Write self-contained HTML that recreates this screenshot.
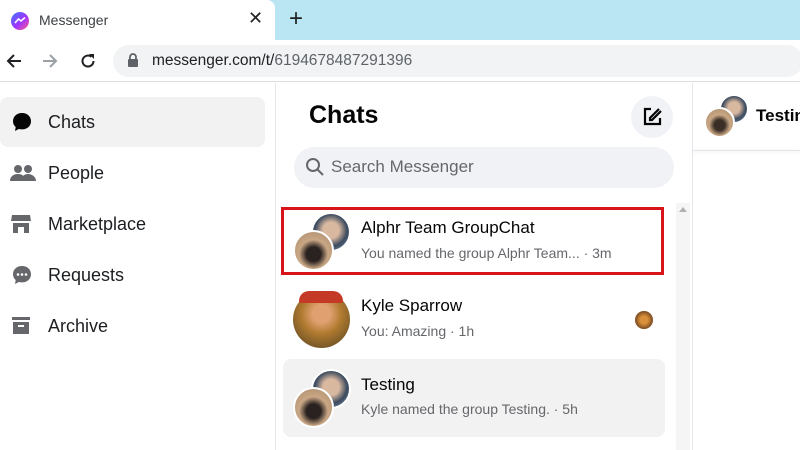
<!DOCTYPE html>
<html><head><meta charset="utf-8"><style>
*{margin:0;padding:0;box-sizing:border-box}
body{width:800px;height:450px;overflow:hidden;background:#fff;font-family:"Liberation Sans",sans-serif;position:relative;color:#050505}
.a{position:absolute}
.nav{position:absolute;left:0;width:265px;height:50px;display:flex;align-items:center;font-size:18px;color:#1c1e21}
.nav svg{position:absolute;left:10px}
.nav span{position:absolute;left:48px}
.av{position:absolute;border-radius:50%;border:2px solid #fff}
.name{position:absolute;left:361px;font-size:17px;color:#050505}
.sub{position:absolute;left:361px;font-size:14px;color:#65676b}
</style></head><body>
<!-- tab bar -->
<div class="a" style="left:0;top:0;width:800px;height:40px;background:#b9e6f2"></div>
<div class="a" style="left:0;top:0;width:275px;height:40px;background:#fff;border-top-right-radius:8px"></div>
<div class="a" style="left:11px;top:12px;width:18px;height:18px;border-radius:50%;background:linear-gradient(135deg,#3d7bff,#a033ff 55%,#ff5c87)"></div>
<svg class="a" style="left:14px;top:16px" width="12" height="9" viewBox="0 0 12 9"><path d="M1 7 L4.5 3 L7 5 L11 1.5" stroke="#fff" stroke-width="1.6" fill="none"/></svg>
<div class="a" style="left:39px;top:12px;font-size:14px;color:#3c4043">Messenger</div>
<div class="a" style="left:248px;top:8px;font-size:18px;color:#202124">✕</div>
<div class="a" style="left:289px;top:5px;font-size:24px;color:#202124">+</div>
<!-- address bar -->
<div class="a" style="left:0;top:40px;width:800px;height:42px;background:#fff;border-bottom:1px solid #dadce0"></div>
<svg class="a" style="left:5px;top:52px" width="18" height="18" viewBox="0 0 18 18"><path d="M16 9H3M9 3L3 9l6 6" stroke="#202124" stroke-width="2" fill="none"/></svg>
<svg class="a" style="left:41px;top:52px" width="18" height="18" viewBox="0 0 18 18"><path d="M2 9h13M9 3l6 6-6 6" stroke="#9aa0a6" stroke-width="2" fill="none"/></svg>
<svg class="a" style="left:79px;top:52px" width="18" height="18" viewBox="0 0 18 18"><path d="M14.5 9A5.5 5.5 0 1 1 12.5 4.8" stroke="#202124" stroke-width="2" fill="none"/><path d="M10 2h5v5z" fill="#202124"/></svg>
<div class="a" style="left:113px;top:45px;width:690px;height:32px;border-radius:16px;background:#f1f3f4"></div>
<svg class="a" style="left:127px;top:53px" width="12" height="14" viewBox="0 0 12 14"><path d="M3 6V4a3 3 0 0 1 6 0v2" stroke="#5f6368" stroke-width="1.8" fill="none"/><rect x="1" y="6" width="10" height="8" rx="1" fill="#5f6368"/></svg>
<div class="a" style="left:152px;top:52px;font-size:15.5px;color:#202124">messenger.com/t/<span style="color:#5f6368">6194678487291396</span></div>
<!-- dividers -->
<div class="a" style="left:275px;top:83px;width:1px;height:367px;background:#e4e6eb"></div>
<div class="a" style="left:692px;top:83px;width:1px;height:367px;background:#e4e6eb"></div>
<div class="a" style="left:693px;top:150px;width:107px;height:1px;background:#e4e6eb;box-shadow:0 1px 3px rgba(0,0,0,.1)"></div>
<!-- sidebar -->
<div class="a" style="left:0;top:97px;width:265px;height:50px;background:#f2f2f2;border-radius:8px"></div>
<div class="nav" style="top:97px"><svg width="24" height="24" viewBox="0 0 24 24"><path d="M12 3C6.5 3 3 6.8 3 11.2c0 2.4 1 4.4 2.7 5.8L5 21l3.8-2c1 .3 2.1.4 3.2.4 5.5 0 9-3.8 9-8.2S17.5 3 12 3z" fill="#050505"/></svg><span>Chats</span></div>
<div class="nav" style="top:148px"><svg width="26" height="24" viewBox="0 0 26 24"><circle cx="8" cy="8" r="4" fill="#65676b"/><circle cx="18" cy="8" r="4" fill="#65676b"/><path d="M0 20c0-4 3-7 8-7s7 3 7 7zM11 20c0-4 3-7 7-7s8 3 8 7z" fill="#65676b"/></svg><span>People</span></div>
<div class="nav" style="top:199px"><svg width="22" height="24" viewBox="0 0 22 24"><path d="M2 3h18l1 6H1z" fill="#65676b"/><path d="M3 11h16v10h-5v-6H8v6H3z" fill="#65676b"/></svg><span>Marketplace</span></div>
<div class="nav" style="top:250px"><svg width="24" height="24" viewBox="0 0 24 24"><path d="M12 3C6.5 3 3 6.8 3 11.2c0 2.4 1 4.4 2.7 5.8L5 21l3.8-2c1 .3 2.1.4 3.2.4 5.5 0 9-3.8 9-8.2S17.5 3 12 3z" fill="#65676b"/><circle cx="8" cy="11.5" r="1.3" fill="#fff"/><circle cx="12" cy="11.5" r="1.3" fill="#fff"/><circle cx="16" cy="11.5" r="1.3" fill="#fff"/></svg><span>Requests</span></div>
<div class="nav" style="top:301px"><svg width="22" height="24" viewBox="0 0 22 24"><rect x="2" y="3" width="18" height="3" fill="#65676b"/><path d="M3 8h16v12H3z" fill="#65676b"/><rect x="8" y="11" width="6" height="2" fill="#fff"/></svg><span>Archive</span></div>
<!-- chats column -->
<div class="a" style="left:309px;top:101px;font-size:25px;font-weight:bold">Chats</div>
<div class="a" style="left:631px;top:96px;width:42px;height:42px;border-radius:50%;background:#f0f2f5"></div>
<svg class="a" style="left:641px;top:106px" width="22" height="22" viewBox="0 0 22 22"><path d="M10 3H4v15h15v-6" stroke="#050505" stroke-width="2.2" fill="none"/><path d="M18 3L9 12v2h2l9-9" stroke="#050505" stroke-width="2.2" fill="none"/></svg>
<div class="a" style="left:294px;top:147px;width:380px;height:41px;border-radius:21px;background:#f0f2f5"></div>
<svg class="a" style="left:305px;top:157px" width="20" height="20" viewBox="0 0 20 20"><circle cx="8" cy="8" r="6" stroke="#65676b" stroke-width="2" fill="none"/><path d="M12.5 12.5L18 18" stroke="#65676b" stroke-width="2"/></svg>
<div class="a" style="left:331px;top:157px;font-size:17px;color:#65676b">Search Messenger</div>
<!-- scrollbar -->
<div class="a" style="left:676px;top:203px;width:14px;height:247px;background:#f5f5f5"></div>
<div class="a" style="left:679px;top:207px;border:4px solid transparent;border-bottom:5px solid #b0b0b0;border-top:0"></div>
<!-- item 3 bg -->
<div class="a" style="left:283px;top:359px;width:382px;height:78px;background:#f2f2f2;border-radius:8px"></div>
<!-- item 1 -->
<div class="av" style="left:311px;top:212px;width:40px;height:40px;background:radial-gradient(circle at 50% 45%,#d9b8a0 30%,#3b4a5e 60%,#8fa9c2)"></div>
<div class="av" style="left:293px;top:230px;width:41px;height:41px;background:radial-gradient(circle at 50% 60%,#2a2220 25%,#c9a785 50%,#a88a6a)"></div>
<div class="name" style="top:218px">Alphr Team GroupChat</div>
<div class="sub" style="top:245px">You named the group Alphr Team... · 3m</div>
<div class="a" style="left:281px;top:207px;width:383px;height:68px;border:3px solid #d7141a"></div>
<!-- item 2 -->
<div class="av" style="left:293px;top:291px;width:57px;height:57px;border:none;background:radial-gradient(circle at 50% 40%,#e0a070 20%,#b07a30 45%,#7a5a28 75%),#c0392b"></div>
<div class="a" style="left:299px;top:291px;width:44px;height:12px;background:#c43a26;border-radius:20px 20px 4px 4px"></div>
<div class="name" style="top:296px">Kyle Sparrow</div>
<div class="sub" style="top:323px">You: Amazing · 1h</div>
<div class="a" style="left:635px;top:311px;width:18px;height:18px;border-radius:50%;background:radial-gradient(circle,#d9903a 30%,#7a4a20 70%)"></div>
<!-- item 3 -->
<div class="av" style="left:311px;top:369px;width:40px;height:40px;background:radial-gradient(circle at 50% 45%,#d9b8a0 30%,#3b4a5e 60%,#8fa9c2)"></div>
<div class="av" style="left:293px;top:387px;width:41px;height:41px;background:radial-gradient(circle at 50% 60%,#2a2220 25%,#c9a785 50%,#a88a6a)"></div>
<div class="name" style="top:375px">Testing</div>
<div class="sub" style="top:401px">Kyle named the group Testing. · 5h</div>
<!-- right header -->
<div class="av" style="left:719px;top:94px;width:30px;height:30px;background:radial-gradient(circle at 50% 45%,#d9b8a0 30%,#3b4a5e 60%,#8fa9c2)"></div>
<div class="av" style="left:704px;top:107px;width:31px;height:31px;background:radial-gradient(circle at 50% 60%,#3a2e26 25%,#c9a785 50%,#a88a6a)"></div>
<div class="a" style="left:756px;top:106px;font-size:17px;font-weight:bold">Testing</div>
</body></html>
